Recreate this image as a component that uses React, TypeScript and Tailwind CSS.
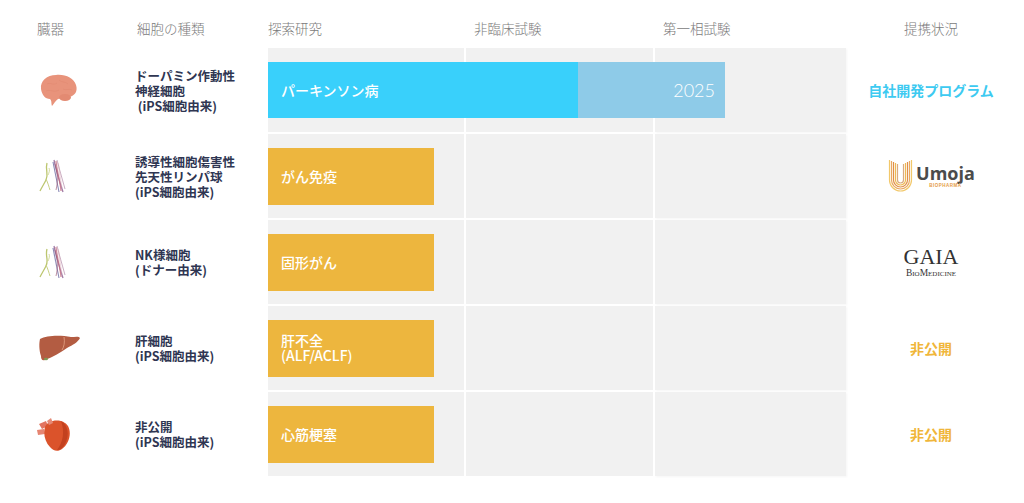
import React from "react";

const JP = "font-['Noto_Sans_CJK_JP','Noto_Sans',sans-serif]";

function Brain() {
  return (
    <svg width="42" height="36" viewBox="0 0 42 36">
      <path
        d="M4 17 C3 9 10 3 19 3 C28 2 37 6 39 13 C41 19 38 24 32 25 C28 27 24 26 21 27 C18 29 17 32 15 34 C14 31 15 29 13 27 C8 27 5 23 4 17Z"
        fill="#e8937b"
      />
      <ellipse cx="28" cy="25.5" rx="6" ry="3.5" fill="#e38a72" />
      <path
        d="M10 12 C14 10 16 14 20 11 M22 8 C25 11 28 9 31 12 M9 19 C13 17 17 21 22 18 M26 17 C29 19 32 16 35 18"
        stroke="#d97f68"
        strokeWidth="0.6"
        fill="none"
        opacity="0.5"
      />
    </svg>
  );
}

function Nerve() {
  return (
    <svg width="30" height="36" viewBox="0 0 30 36">
      <path d="M10 5 C8 12 12 16 9 22 C7 26 5 29 3 33" stroke="#bcc66f" strokeWidth="1.3" fill="none" />
      <path d="M9 21 C11 25 12 29 13 32" stroke="#c8d085" strokeWidth="1" fill="none" />
      <path d="M12 10 C13 12 12 15 11 17" stroke="#c8d085" strokeWidth="0.8" fill="none" />
      <path d="M17 2 C19 12 22 22 26 34" stroke="#8a5a90" strokeWidth="1.3" fill="none" opacity="0.8" />
      <path d="M19 3 C20 13 23 23 24 33" stroke="#c56d7f" strokeWidth="1.2" fill="none" opacity="0.8" />
      <path d="M16 4 C18 14 20 24 22 34" stroke="#6d6ca3" strokeWidth="1.1" fill="none" opacity="0.8" />
      <path d="M20 2 C22 10 25 20 28 31" stroke="#b28aa8" strokeWidth="1" fill="none" opacity="0.7" />
      <path d="M18 6 C21 16 21 24 19 32" stroke="#9a5570" strokeWidth="0.9" fill="none" opacity="0.7" />
      <path d="M21 5 C23 14 23 22 25 30" stroke="#d9a0b0" strokeWidth="1.4" fill="none" opacity="0.4" />
    </svg>
  );
}

function Liver() {
  return (
    <svg width="44" height="30" viewBox="0 0 44 30">
      <path
        d="M3 6 C10 2 24 2 34 4 C38 4 42 3 43 5 C41 9 36 12 30 15 C24 19 16 24 8 27 C5 28 4 26 4 23 C2 17 2 10 3 6Z"
        fill="#b35c42"
      />
      <path d="M27 4 C28 9 27 14 25 17" stroke="#e3a586" strokeWidth="0.8" fill="none" />
      <ellipse cx="9" cy="26" rx="2" ry="1.3" fill="#7f9a55" />
    </svg>
  );
}

function Heart() {
  return (
    <svg width="34" height="36" viewBox="0 0 34 36">
      <path d="M2 8 L9 5 L11 10 L5 13 Z" fill="#e27460" />
      <path d="M0 14 L7 13 L8 18 L1 19 Z" fill="#e68571" />
      <path
        d="M8 11 C11 3 26 2 31 10 C35 17 32 28 25 33 C21 36 16 35 13 31 C8 26 6 18 8 11Z"
        fill="#db532b"
      />
      <path d="M24 5 C31 9 33 19 28 28 C26 32 23 34 20 34 C26 26 28 16 24 5Z" fill="#c3411f" />
      <path d="M10 5 L14 2 L16 7 L12 9 Z" fill="#e58a77" />
    </svg>
  );
}

function Umoja() {
  const radii = [11, 9, 7, 5, 3];
  const colors = ["#f2c86a", "#e9a961", "#df8f49", "#f0ba52", "#d9ab80"];
  return (
    <div className="flex items-center gap-[2px]">
      <svg width="27" height="36" viewBox="0 0 27 36">
        {radii.map((r, i) => (
          <path
            key={r}
            d={`M${13.5 - r} ${2 + i} V22 A${r} ${r} 0 0 0 ${13.5 + r} 22 V${2 + i}`}
            stroke={colors[i]}
            strokeWidth="1.2"
            fill="none"
          />
        ))}
      </svg>
      <div className="flex flex-col items-center gap-[1px]">
        <span className="font-['Open_Sans',sans-serif] text-[18px] font-bold leading-[18px] text-[#4b4b4b]">
          Umoja
        </span>
        <span className="font-['Liberation_Sans',sans-serif] text-[4.5px] font-bold leading-[5px] tracking-[0.5px] text-[#e59b45]">
          BIOPHARMA
        </span>
      </div>
    </div>
  );
}

function Gaia() {
  return (
    <div className="flex flex-col items-center font-['Liberation_Serif',serif] text-[#333]">
      <span className="text-[22px] leading-[22px] tracking-[0px]">GAIA</span>
      <span className="text-[9.5px] leading-[10px] [font-variant:small-caps]">BioMedicine</span>
    </div>
  );
}

type Row = {
  icon: React.ReactNode;
  cell: string[];
  right: React.ReactNode;
  bar: React.ReactNode;
};

function OrangeBar({ lines }: { lines: string[] }) {
  return (
    <div className="col-span-3 col-start-1 row-start-1 flex h-[57px] w-[166px] flex-col justify-center self-center justify-self-start bg-[#edb63e] pl-[13px] text-[14px] font-medium leading-[15px] text-white">
      {lines.map((l) => (
        <span key={l}>{l}</span>
      ))}
    </div>
  );
}

const rows: Row[] = [
  {
    icon: <Brain />,
    cell: ["ドーパミン作動性", "神経細胞", "\u00a0(iPS細胞由来)"],
    right: <span className="text-[14px] font-bold text-[#3dcaf1]">自社開発プログラム</span>,
    bar: (
      <div className="col-span-3 col-start-1 row-start-1 flex h-[56px] w-[457px] self-center justify-self-start">
        <div className="flex w-[310px] items-center bg-[#39d0fb] pl-[13px] text-[14px] font-medium text-white">
          パーキンソン病
        </div>
        <div className="flex flex-1 items-center justify-end bg-[#8ecbe8] pr-[10px] font-['Lato',sans-serif] text-[18px] font-light text-white">
          2025
        </div>
      </div>
    ),
  },
  {
    icon: <Nerve />,
    cell: ["誘導性細胞傷害性", "先天性リンパ球", "(iPS細胞由来)"],
    right: <Umoja />,
    bar: <OrangeBar lines={["がん免疫"]} />,
  },
  {
    icon: <Nerve />,
    cell: ["NK様細胞", "(ドナー由来)"],
    right: <Gaia />,
    bar: <OrangeBar lines={["固形がん"]} />,
  },
  {
    icon: <Liver />,
    cell: ["肝細胞", "(iPS細胞由来)"],
    right: <span className="text-[14px] font-bold text-[#f0b63a]">非公開</span>,
    bar: <OrangeBar lines={["肝不全", "(ALF/ACLF)"]} />,
  },
  {
    icon: <Heart />,
    cell: ["非公開", "(iPS細胞由来)"],
    right: <span className="text-[14px] font-bold text-[#f0b63a]">非公開</span>,
    bar: <OrangeBar lines={["心筋梗塞"]} />,
  },
];

export default function App() {
  return (
    <div className={`h-[503px] w-[1024px] overflow-hidden bg-white ${JP}`}>
      {/* Header */}
      <div className="flex h-[48px] items-start pt-[18px] text-[13.5px] font-light text-[#7b7b7b]">
        <div className="w-[125px] pl-[37px]">臓器</div>
        <div className="w-[143px] pl-[12px]">細胞の種類</div>
        <div className="grid w-[578px] grid-cols-[196px_187px_191px] gap-x-[2px]">
          <div>探索研究</div>
          <div className="pl-[8px]">非臨床試験</div>
          <div className="pl-[8px]">第一相試験</div>
        </div>
        <div className="flex flex-1 justify-center pr-[8px]">提携状況</div>
      </div>

      {/* Rows */}
      <div className="flex flex-col gap-y-[2px]">
        {rows.map((r, i) => (
          <div key={i} className="flex h-[84px]">
            <div className="flex w-[125px] items-center pl-[37px]">{r.icon}</div>
            <div className="flex w-[143px] flex-col justify-center pl-[10px] text-[12.5px] font-bold leading-[15px] text-[#2f3652]">
              {r.cell.map((c) => (
                <span key={c}>{c}</span>
              ))}
            </div>
            <div className="grid w-[578px] grid-cols-[196px_187px_191px] grid-rows-1 gap-x-[2px]">
              <div className="col-start-1 row-start-1 bg-[#f1f1f1]" />
              <div className="col-start-2 row-start-1 bg-[#f1f1f1]" />
              <div className="col-start-3 row-start-1 bg-[#f1f1f1] shadow-[1px_1px_2px_rgba(0,0,0,0.04)]" />
              {r.bar}
            </div>
            <div className="flex flex-1 items-center justify-center pr-[8px]">{r.right}</div>
          </div>
        ))}
      </div>
    </div>
  );
}
